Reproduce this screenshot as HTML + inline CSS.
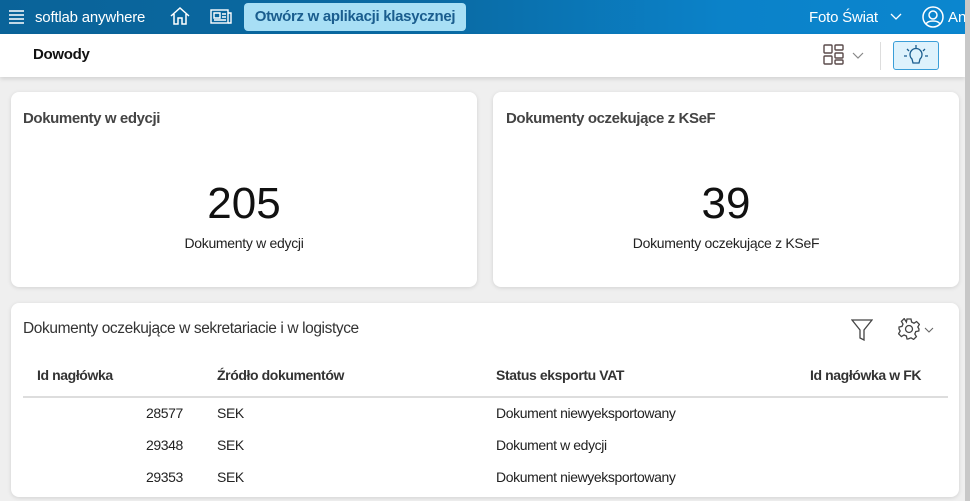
<!DOCTYPE html>
<html><head><meta charset="utf-8"><style>
*{box-sizing:border-box;margin:0;padding:0}
body{width:970px;height:501px;overflow:hidden;background:#efefef;font-family:"Liberation Sans",sans-serif;position:relative;color:#222}
.top{position:absolute;left:0;top:0;width:965px;height:34px;background:linear-gradient(90deg,#0a6399 0%,#0a6aa3 45%,#0b82c9 75%,#0b86cf 100%);color:#fff}
.sub{position:absolute;left:0;top:34px;width:965px;height:43px;background:#fff;box-shadow:0 2px 4px rgba(0,0,0,.12)}
.sb{position:absolute;right:0;top:0;width:5px;height:501px;background:#c8c8c8}
.card{position:absolute;background:#fff;border-radius:8px;box-shadow:0 1px 4px rgba(0,0,0,.12)}
.t{position:absolute;font-size:15px;font-weight:bold;color:#444;letter-spacing:-.4px}
.big{position:absolute;width:100%;text-align:center;font-size:44px;color:#111}
.cap{position:absolute;width:100%;text-align:center;font-size:14px;color:#222;letter-spacing:-.3px}
.c{position:absolute;font-size:14px;letter-spacing:-.4px;white-space:nowrap}
.b{font-weight:bold;color:#333}
</style></head><body>
<div class="top">
 <svg style="position:absolute;left:9px;top:10px" width="15" height="14"><path d="M0 1h15M0 5h15M0 9h15M0 13h15" stroke="#fff" stroke-width="1.4"/></svg>
 <div style="position:absolute;left:35px;top:9px;font-size:15px;letter-spacing:-.2px">softlab anywhere</div>
 <svg style="position:absolute;left:170px;top:6px" width="20" height="20" fill="none" stroke="#fff" stroke-width="1.5"><path d="M1 10L10 2l9 8M4 8v10h4v-6h4v6h4V8"/></svg>
 <svg style="position:absolute;left:210px;top:9px" width="22" height="16" fill="none" stroke="#fff" stroke-width="1.4"><rect x="1" y="1" width="17" height="13"/><path d="M18 4h3v10h-3M4 4h6v5H4zM12 5h4M12 8h4M4 11h12"/></svg>
 <div style="position:absolute;left:244px;top:3px;width:222px;height:28px;background:#a8dff5;border-radius:4px;color:#1a5d8e;font-size:15px;font-weight:bold;text-align:center;line-height:28px;letter-spacing:-.3px">Otwórz w aplikacji klasycznej</div>
 <div style="position:absolute;left:809px;top:9px;font-size:15px;letter-spacing:-.2px">Foto Świat</div>
 <svg style="position:absolute;left:890px;top:13px" width="12" height="8" fill="none" stroke="#fff" stroke-width="1.3"><path d="M1 1l5 5 5-5"/></svg>
 <svg style="position:absolute;left:922px;top:6px" width="22" height="22" fill="none" stroke="#fff" stroke-width="1.5"><circle cx="11" cy="11" r="10"/><circle cx="11" cy="9" r="4"/><path d="M4 18c2-4 12-4 14 0"/></svg>
 <div style="position:absolute;left:948px;top:9px;font-size:15px">An</div>
</div>
<div class="sub">
 <div style="position:absolute;left:33px;top:12px;font-size:15px;font-weight:bold;color:#111;letter-spacing:-.3px">Dowody</div>
 <svg style="position:absolute;left:823px;top:10px" width="22" height="22" fill="none" stroke="#5a4a4a" stroke-width="1.4"><rect x="1" y="1" width="8" height="8" rx="1"/><rect x="12" y="1" width="8" height="5" rx="1"/><rect x="12" y="9" width="8" height="5" rx="1"/><rect x="1" y="12" width="8" height="8" rx="1"/><rect x="12" y="16" width="8" height="4" rx="1"/></svg>
 <svg style="position:absolute;left:852px;top:18px" width="12" height="7" fill="none" stroke="#888" stroke-width="1.2"><path d="M1 1l5 5 5-5"/></svg>
 <div style="position:absolute;left:880px;top:8px;width:1px;height:28px;background:#ddd"></div>
 <div style="position:absolute;left:893px;top:7px;width:46px;height:29px;border:1px solid #3a9ed8;border-radius:3px;background:#def2fc"></div>
 <svg style="position:absolute;left:903px;top:10px" width="26" height="24" fill="none" stroke="#1a5d8e" stroke-width="1.3"><path d="M9 15a6 6 0 1 1 8 0l-1 4h-6z M13 1v3M4 5l2 2M22 5l-2 2M1 12h3M22 12h3"/></svg>
</div>
<div class="card" style="left:11px;top:92px;width:466px;height:195px">
 <div class="t" style="left:12px;top:18px">Dokumenty w edycji</div>
 <div class="big" style="top:87px">205</div>
 <div class="cap" style="top:143px">Dokumenty w edycji</div>
</div>
<div class="card" style="left:493px;top:92px;width:466px;height:195px">
 <div class="t" style="left:13px;top:18px">Dokumenty oczekujące z KSeF</div>
 <div class="big" style="top:87px">39</div>
 <div class="cap" style="top:143px">Dokumenty oczekujące z KSeF</div>
</div>
<div class="card" style="left:11px;top:303px;width:948px;height:194px">
 <div class="t" style="left:12px;top:17px;font-weight:normal;color:#333;font-size:15.5px">Dokumenty oczekujące w sekretariacie i w logistyce</div>
 <svg style="position:absolute;left:840px;top:16px" width="22" height="22" fill="none" stroke="#444" stroke-width="1.3"><path d="M1 1h20l-8 10v10l-4-2v-8z"/></svg>
 <svg style="position:absolute;left:887px;top:15px" width="22" height="22" fill="none" stroke="#444" stroke-width="1.3"><circle cx="11" cy="11" r="3.5"/><path d="M9 1h4l.6 3 2.4 1.2 2.6-1.6 2.8 2.8-1.6 2.6L21 11l-.2 2-3 .6-1 2.4 1.6 2.6-2.8 2.8-2.6-1.6-2 .8L10 21H9l-.6-3-2.4-1-2.6 1.6-2.8-2.8L2.2 13 1 11V9l3-.6 1-2.4-1.6-2.6 2.8-2.8L8.4 4z"/></svg>
 <svg style="position:absolute;left:913px;top:24px" width="10" height="6" fill="none" stroke="#666" stroke-width="1.1"><path d="M1 1l4 4 4-4"/></svg>
 <div class="c b" style="left:26px;top:64px">Id nagłówka</div>
 <div class="c b" style="left:206px;top:64px">Źródło dokumentów</div>
 <div class="c b" style="left:485px;top:64px">Status eksportu VAT</div>
 <div class="c b" style="left:799px;top:64px">Id nagłówka w FK</div>
 <div style="position:absolute;left:12px;top:93px;width:925px;height:2px;background:#ddd"></div>
 <div class="c" style="left:135px;top:102px">28577</div><div class="c" style="left:206px;top:102px">SEK</div><div class="c" style="left:485px;top:102px">Dokument niewyeksportowany</div>
 <div class="c" style="left:135px;top:134px">29348</div><div class="c" style="left:206px;top:134px">SEK</div><div class="c" style="left:485px;top:134px">Dokument w edycji</div>
 <div class="c" style="left:135px;top:166px">29353</div><div class="c" style="left:206px;top:166px">SEK</div><div class="c" style="left:485px;top:166px">Dokument niewyeksportowany</div>
</div>
<div class="sb"></div>
</body></html>
